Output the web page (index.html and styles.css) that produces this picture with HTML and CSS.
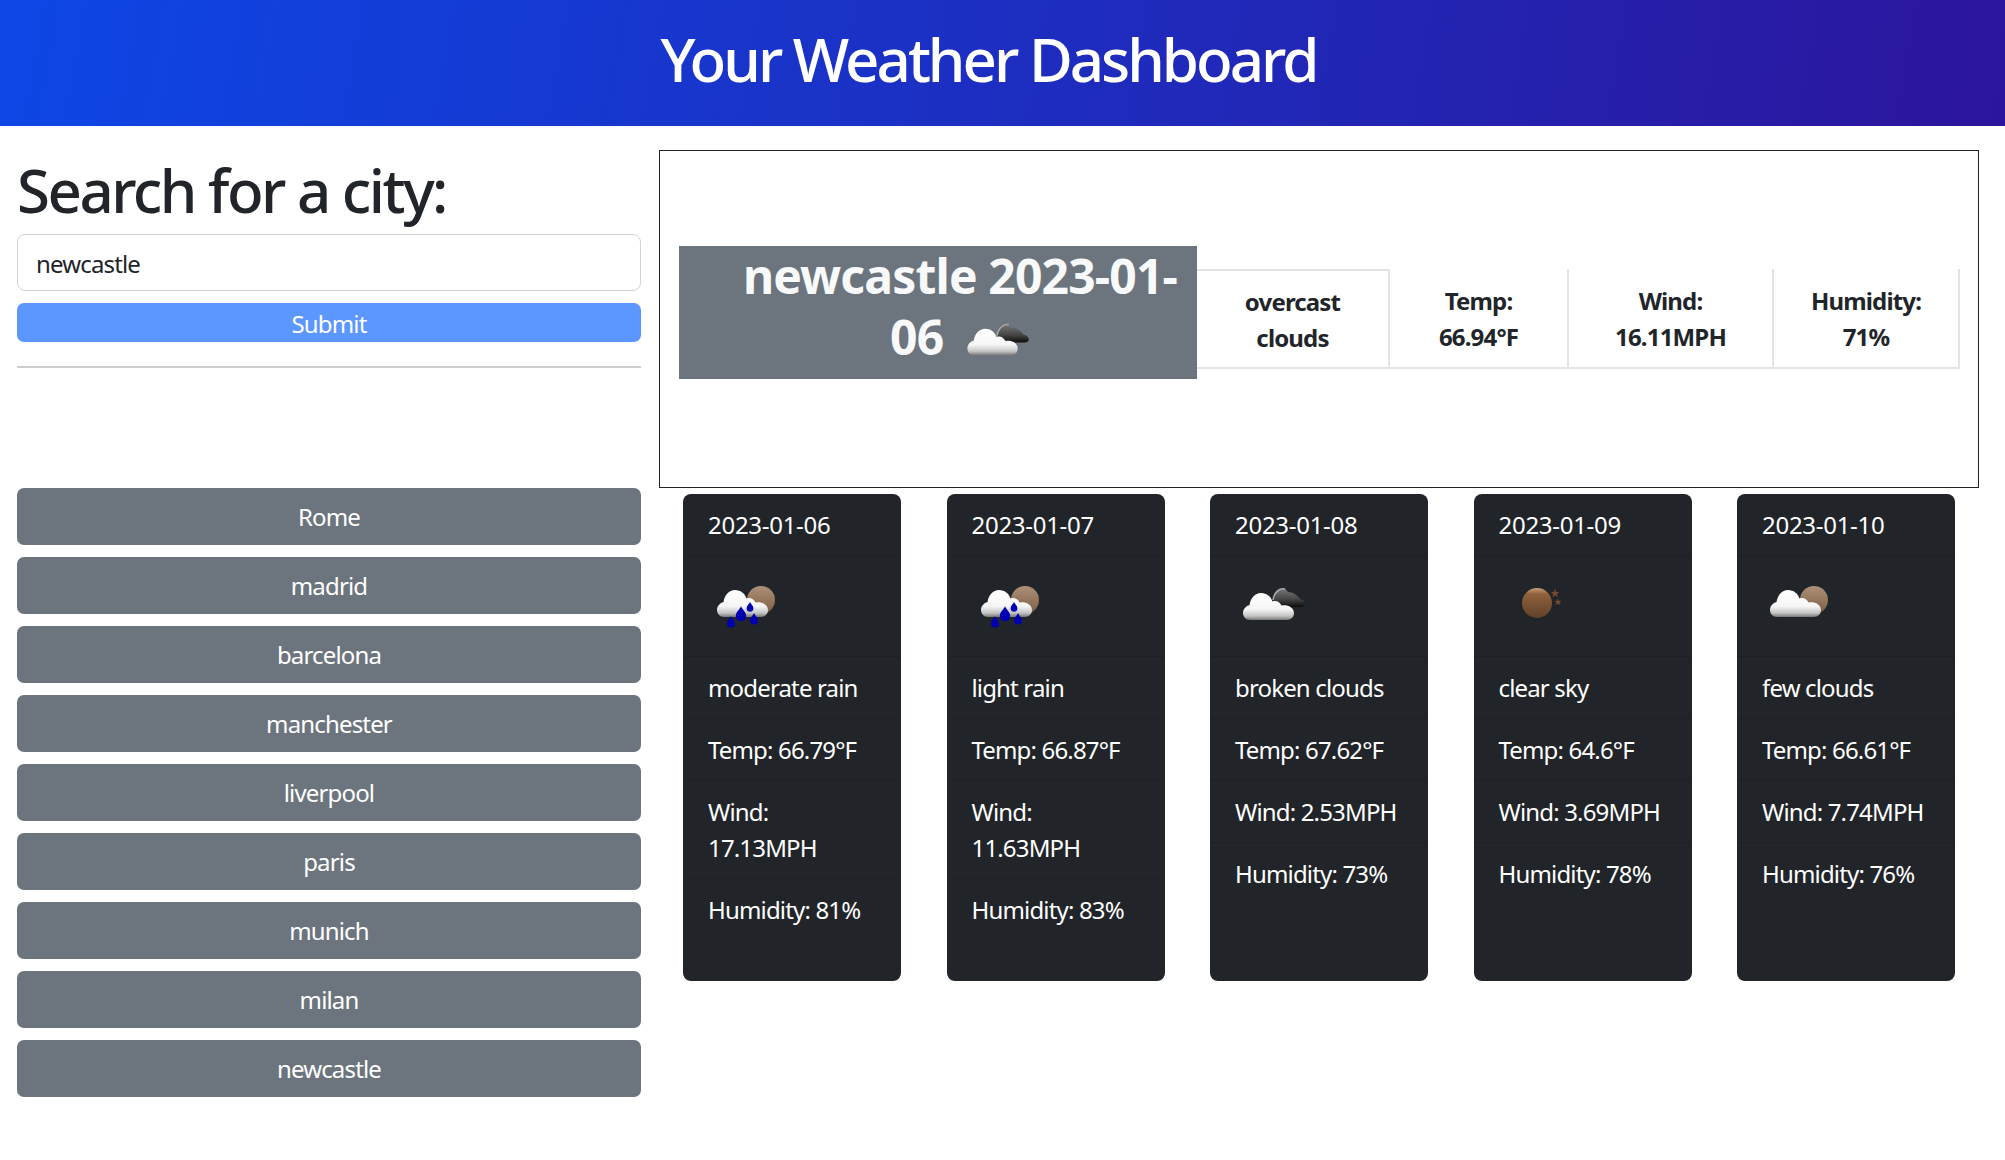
FILE: index.html
```html
<!DOCTYPE html>
<html lang="en">
<head>
  <meta charset="UTF-8" />
  <title>Your Weather Dashboard</title>
  <link rel="stylesheet" href="styles.css">
</head>
<body>
  <svg class="icon-defs" aria-hidden="true">
    <defs>
      <linearGradient id="cloud-white" x1="0" y1="0" x2="0" y2="1">
        <stop offset="0" stop-color="#ffffff" />
        <stop offset="0.6" stop-color="#f6f6f6" />
        <stop offset="0.85" stop-color="#c4c4c4" />
        <stop offset="1" stop-color="#777" />
      </linearGradient>
      <linearGradient id="cloud-dark" x1="0" y1="0" x2="0" y2="1">
        <stop offset="0" stop-color="#7a7a7a" />
        <stop offset="0.6" stop-color="#444" />
        <stop offset="1" stop-color="#0c0c0c" />
      </linearGradient>
      <linearGradient id="sun-tan" x1="0" y1="0" x2="0" y2="1">
        <stop offset="0" stop-color="#ad9078" />
        <stop offset="1" stop-color="#7d5c42" />
      </linearGradient>
      <linearGradient id="sun-clear" x1="0" y1="0" x2="0" y2="1">
        <stop offset="0" stop-color="#c89c78" />
        <stop offset="0.2" stop-color="#8f623c" />
        <stop offset="1" stop-color="#5f4029" />
      </linearGradient>
      <path id="cloud" d="M15 48C10.500 48 8 44.500 8 41C8 37 11 34 14.500 33C15.500 26 20 21 26 21C31.500 21 36 24.500 37.500 29.500C41 28 45 30 46.500 33.500C48 33 50 33 52 33.500C56 34.500 59 37.500 59 41C59 45 56 48 52 48Z" />
      <path id="drop" d="M0 -6C1 -3.500 4 -1.500 4 1.500A4 4 0 0 1 -4 1.500C-4 -1.500 -1 -3.500 0 -6Z" fill="#0000b0" />
      <symbol id="icon-rain" viewBox="0 0 75 75">
        <circle cx="53" cy="31" r="14" fill="url(#sun-tan)" />
        <use href="#cloud" x="1" fill="url(#cloud-white)" />
        <use href="#drop" x="23" y="53" />
        <use href="#drop" transform="translate(33 45) scale(1.3)" />
        <use href="#drop" transform="translate(42 38) scale(.85)" />
        <use href="#drop" x="46" y="50" />
      </symbol>
      <symbol id="icon-few" viewBox="0 0 75 75">
        <circle cx="52" cy="31" r="14" fill="url(#sun-tan)" />
        <use href="#cloud" fill="url(#cloud-white)" />
      </symbol>
      <symbol id="icon-broken" viewBox="0 0 75 75">
        <path d="M42 38C37 36 37 26 41 22C45 18 50 18 53 23C59 23 63 27 65 30C69 31 71 34 70 36C69 38 66 38 64 38Z" fill="url(#cloud-dark)" />
        <path d="M38 31C39 24 44 19 50 20" fill="none" stroke="#a8a8a8" stroke-width="1.500" />
        <use href="#cloud" y="3" fill="url(#cloud-white)" />
      </symbol>
      <symbol id="icon-clear" viewBox="0 0 75 75">
        <circle cx="38" cy="34" r="15" fill="url(#sun-clear)" />
        <path d="M56 20L57.200 23L60.400 23.200L57.900 25.200L58.800 28.300L56 26.500L53.200 28.300L54.100 25.200L51.600 23.200L54.800 23Z" fill="#75492a" />
        <path d="M59 29.500L60 31.800L62.500 32L60.600 33.600L61.200 36L59 34.700L56.800 36L57.400 33.600L55.500 32L58 31.800Z" fill="#75492a" />
      </symbol>
    </defs>
  </svg>

  <header class="top-bar">
    <h1>Your Weather Dashboard</h1>
  </header>

  <main class="layout">
    <section class="sidebar">
      <h2>Search for a city:</h2>
      <input class="city-input" type="text" value="newcastle">
      <button class="submit-btn">Submit</button>
      <hr class="divider">
      <div class="history">
        <button class="history-btn">Rome</button>
        <button class="history-btn">madrid</button>
        <button class="history-btn">barcelona</button>
        <button class="history-btn">manchester</button>
        <button class="history-btn">liverpool</button>
        <button class="history-btn">paris</button>
        <button class="history-btn">munich</button>
        <button class="history-btn">milan</button>
        <button class="history-btn">newcastle</button>
      </div>
    </section>

    <section class="content">
      <div class="current">
        <div class="current-title">newcastle 2023-01-06 <svg class="current-icon"><use href="#icon-broken" /></svg></div>
        <div class="stat stat-desc">overcast clouds</div>
        <div class="stat stat-temp">Temp:<br>66.94°F</div>
        <div class="stat stat-wind">Wind:<br>16.11MPH</div>
        <div class="stat stat-hum">Humidity:<br>71%</div>
      </div>

      <div class="forecast">
        <ul class="card">
          <li class="date-row">2023-01-06</li>
          <li class="icon-row"><svg class="card-icon"><use href="#icon-rain" /></svg></li>
          <li>moderate rain</li>
          <li>Temp: 66.79°F</li>
          <li>Wind: 17.13MPH</li>
          <li>Humidity: 81%</li>
        </ul>
        <ul class="card">
          <li class="date-row">2023-01-07</li>
          <li class="icon-row"><svg class="card-icon"><use href="#icon-rain" /></svg></li>
          <li>light rain</li>
          <li>Temp: 66.87°F</li>
          <li>Wind: 11.63MPH</li>
          <li>Humidity: 83%</li>
        </ul>
        <ul class="card">
          <li class="date-row">2023-01-08</li>
          <li class="icon-row"><svg class="card-icon"><use href="#icon-broken" /></svg></li>
          <li>broken clouds</li>
          <li>Temp: 67.62°F</li>
          <li>Wind: 2.53MPH</li>
          <li>Humidity: 73%</li>
        </ul>
        <ul class="card">
          <li class="date-row">2023-01-09</li>
          <li class="icon-row"><svg class="card-icon"><use href="#icon-clear" /></svg></li>
          <li>clear sky</li>
          <li>Temp: 64.6°F</li>
          <li>Wind: 3.69MPH</li>
          <li>Humidity: 78%</li>
        </ul>
        <ul class="card">
          <li class="date-row">2023-01-10</li>
          <li class="icon-row"><svg class="card-icon"><use href="#icon-few" /></svg></li>
          <li>few clouds</li>
          <li>Temp: 66.61°F</li>
          <li>Wind: 7.74MPH</li>
          <li>Humidity: 76%</li>
        </ul>
      </div>
    </section>
  </main>
</body>
</html>
```

FILE: styles.css
```css
* {
  box-sizing: border-box;
}
body {
  margin: 0;
  font-family: "Noto Sans", "Open Sans", Arial, sans-serif;
  font-size: 24px;
  line-height: 36px;
  letter-spacing: -0.035em;
  color: #212529;
  background: #fff;
}
.icon-defs {
  display: block;
  width: 0;
  height: 0;
}

.top-bar {
  height: 126px;
  padding: 0 28px 8px 0;
  display: flex;
  align-items: center;
  justify-content: center;
  color: #fff;
  background: linear-gradient(100deg, #0d47e6, #2c159c);
}
.top-bar h1 {
  margin: 0;
  font-size: 60px;
  line-height: 72px;
  font-weight: 500;
  letter-spacing: -0.05em;
}

.layout {
  display: flex;
  gap: 18px;
  padding: 24px 26px 0 17px;
}
.sidebar {
  width: 624px;
  flex: none;
}
.sidebar h2 {
  margin: 0 0 8px;
  padding-top: 4px;
  font-size: 60px;
  line-height: 72px;
  font-weight: 500;
  letter-spacing: -0.042em;
}
.city-input {
  display: block;
  width: 100%;
  height: 57px;
  margin-bottom: 12px;
  padding: 2px 18px 0;
  font: inherit;
  letter-spacing: inherit;
  color: #212529;
  border: 1px solid #ced4da;
  border-radius: 8px;
}
button {
  display: block;
  width: 100%;
  font: inherit;
  letter-spacing: inherit;
  color: #fff;
  border: none;
  border-radius: 7px;
}
.submit-btn {
  height: 39px;
  padding: 2px 0 0;
  background: #5c96ff;
}
.divider {
  height: 2px;
  margin: 24px 0 120px;
  border: none;
  background: #ccc;
}
.history {
  display: flex;
  flex-direction: column;
  gap: 12px;
}
.history-btn {
  height: 57px;
  background: #6c757d;
}

.content {
  flex: 1;
  min-width: 0;
}
.current {
  height: 338px;
  padding: 0 19px;
  display: flex;
  align-items: center;
  border: 1px solid #212529;
}
.current-title {
  width: 518px;
  flex: none;
  margin-bottom: 14px;
  padding: 1px 0 0 44px;
  font-size: 48px;
  line-height: 58px;
  font-weight: 700;
  text-align: center;
  color: #f8f9fa;
  background: #6c757d;
}
.current-icon {
  width: 75px;
  height: 74px;
  margin: 0 -4px 0 4px;
  vertical-align: middle;
}
.stat {
  padding: 12px;
  flex: none;
  font-weight: 700;
  text-align: center;
  border-right: 2px solid #e4e4e4;
  border-bottom: 2px solid #e4e4e4;
}
.stat-desc {
  width: 193px;
  padding: 13px 12px 11px;
  border-top: 2px solid #e4e4e4;
}
.stat-temp {
  width: 179px;
  padding-top: 14px;
}
.stat-wind {
  width: 205px;
  padding-top: 14px;
}
.stat-hum {
  width: 186px;
  padding-top: 14px;
}

.forecast {
  display: flex;
  gap: 45.5px;
  margin-top: 6px;
  padding-left: 24px;
}
.card {
  width: 218px;
  height: 487px;
  margin: 0;
  padding: 0;
  flex: none;
  list-style: none;
  color: #fff;
  background: #212529;
  border-radius: 8px;
}
.card li {
  padding: 13px 25px 12px;
  border-bottom: 1px solid rgba(0, 0, 0, 0.125);
}
.card li:last-child {
  border-bottom: none;
}
.card .date-row {
  letter-spacing: -0.012em;
}
.card-icon {
  display: block;
  width: 75px;
  height: 75px;
  filter: blur(0.5px);
}
```
